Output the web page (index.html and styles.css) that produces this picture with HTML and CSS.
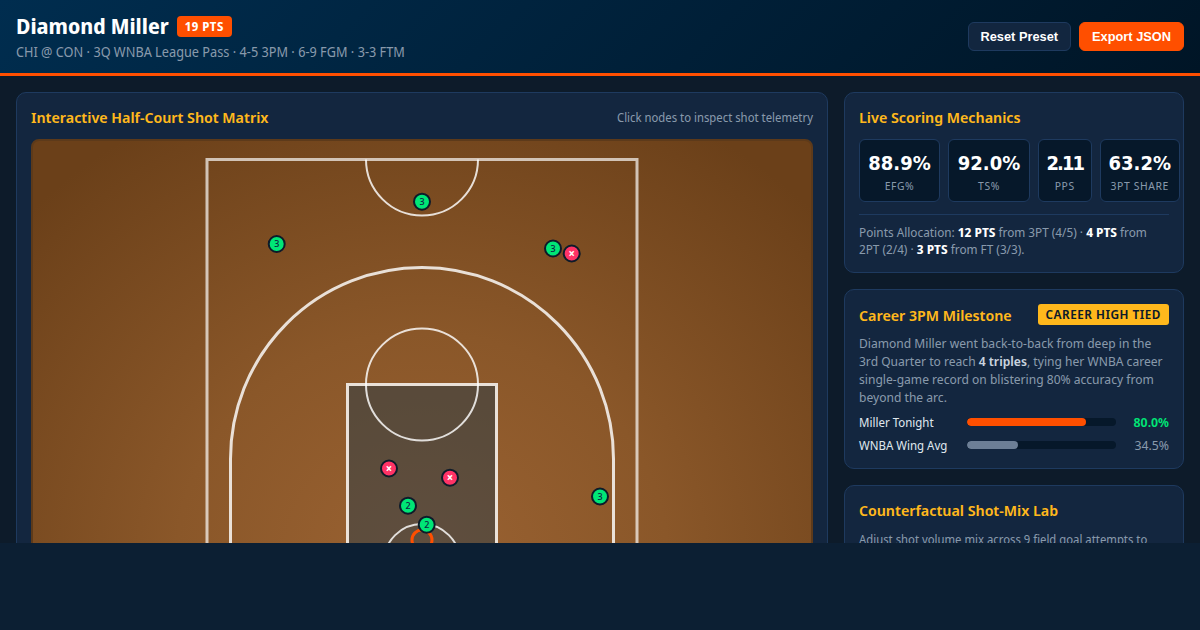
FILE: index.html
```html
<!DOCTYPE html>
<html lang="en">
<head>
<meta charset="utf-8">
<title>Diamond Miller Shot Matrix</title>
<link rel="stylesheet" href="styles.css">
</head>
<body>
<div class="app">
  <header class="topbar">
    <div class="identity">
      <div class="title-row"><h1>Diamond Miller</h1><span class="pts">19 PTS</span></div>
      <p class="sub">CHI @ CON · 3Q WNBA League Pass · 4-5 3PM · 6-9 FGM · 3-3 FTM</p>
    </div>
    <div class="actions">
      <button class="btn">Reset Preset</button>
      <button class="btn primary">Export JSON</button>
    </div>
  </header>
  <main class="layout">
    <section class="card court-card">
      <div class="card-head">
        <h2>Interactive Half-Court Shot Matrix</h2>
        <span class="hint">Click nodes to inspect shot telemetry</span>
      </div>
      <div class="court">
        <svg class="court-svg" viewBox="33 141 778 500" width="778" height="500">
          <rect class="line key" x="347.500" y="384.500" width="149" height="300"/>
          <rect class="line outer" x="207" y="159.500" width="430" height="600"/>
          <path class="line thin" d="M366 159.500A56 56 0 0 0 478 159.500"/>
          <path class="line" d="M230.500 760V459A191.500 191.500 0 0 1 613.500 459V760"/>
          <circle class="line thin" cx="422" cy="384.500" r="56"/>
          <circle class="line thin" cx="422" cy="562" r="38"/>
          <circle class="hoop" cx="422" cy="540" r="10"/>
          <g class="mark make"><circle cx="422" cy="201.700" r="8"/><text x="422" y="205">3</text></g>
          <g class="mark make"><circle cx="276.700" cy="244" r="8"/><text x="276.700" y="247.300">3</text></g>
          <g class="mark make"><circle cx="553" cy="248.500" r="8"/><text x="553" y="251.800">3</text></g>
          <g class="mark miss"><circle cx="571.700" cy="253.500" r="8"/><text x="571.700" y="257.500">×</text></g>
          <g class="mark miss"><circle cx="389" cy="468.500" r="8"/><text x="389" y="472.500">×</text></g>
          <g class="mark miss"><circle cx="450" cy="477.700" r="8"/><text x="450" y="481.700">×</text></g>
          <g class="mark make"><circle cx="408" cy="505.700" r="8"/><text x="408" y="509">2</text></g>
          <g class="mark make"><circle cx="426.700" cy="524.700" r="8"/><text x="426.700" y="528">2</text></g>
          <g class="mark make"><circle cx="600" cy="496.500" r="8"/><text x="600" y="499.800">3</text></g>
        </svg>
      </div>
    </section>
    <aside class="side">
      <section class="card">
        <h2>Live Scoring Mechanics</h2>
        <div class="stats">
          <div class="stat"><b>88.9%</b><span>EFG%</span></div>
          <div class="stat"><b>92.0%</b><span>TS%</span></div>
          <div class="stat"><b class="tight">2.11</b><span>PPS</span></div>
          <div class="stat"><b>63.2%</b><span>3PT SHARE</span></div>
        </div>
        <p class="alloc">Points Allocation: <strong>12 PTS</strong> from 3PT (4/5) · <strong>4 PTS</strong> from 2PT (2/4) · <strong>3 PTS</strong> from FT (3/3).</p>
      </section>
      <section class="card milestone-card">
        <div class="card-head">
          <h2>Career 3PM Milestone</h2>
          <span class="tag">CAREER HIGH TIED</span>
        </div>
        <p class="body-text">Diamond Miller went back-to-back from deep in the 3rd Quarter to reach <strong>4 triples</strong>, tying her WNBA career single-game record on blistering 80% accuracy from beyond the arc.</p>
        <div class="bar-row"><span class="bar-label">Miller Tonight</span><div class="track"><div class="fill hot" style="width:80%"></div></div><span class="bar-val good">80.0%</span></div>
        <div class="bar-row"><span class="bar-label">WNBA Wing Avg</span><div class="track"><div class="fill muted" style="width:34.5%"></div></div><span class="bar-val">34.5%</span></div>
      </section>
      <section class="card">
        <h2>Counterfactual Shot-Mix Lab</h2>
        <p class="lab">Adjust shot volume mix across 9 field goal attempts to</p>
      </section>
    </aside>
  </main>
</div>
</body>
</html>
```
FILE: styles.css
```css
* { box-sizing: border-box; }
html, body { margin: 0; height: 100%; }
body {
  background: #0c1f33;
  color: #fff;
  font-family: "Noto Sans Display", "Noto Sans", sans-serif;
}
.app { height: 543px; overflow: hidden; background: #0d1b2a; }
.topbar {
  height: 76px;
  padding: 0 16px;
  display: flex;
  align-items: center;
  justify-content: space-between;
  background: linear-gradient(135deg, #002d4f 0%, #001526 100%);
  border-bottom: 3px solid #ff4f00;
}
.title-row { display: flex; align-items: center; gap: 8px; }
h1 { margin: 0; font-size: 20.800px; font-weight: 700; line-height: 28px; }
.pts {
  background: #ff4f00;
  border-radius: 4px;
  padding: 2px 8px;
  font-size: 12px;
  font-weight: 700;
  line-height: 17px;
  letter-spacing: .5px;
}
.sub { margin: 3px 0 0; font-size: 13.500px; line-height: 18px; color: #8899ab; }
.actions { display: flex; gap: 8px; }
.btn {
  height: 29px;
  padding: 0 12px;
  border: 1px solid #1e3a5f;
  border-radius: 6px;
  background: #12263f;
  color: #fff;
  font-family: "Liberation Sans", sans-serif;
  font-size: 12.800px;
  font-weight: 700;
}
.btn.primary { background: #ff4f00; border-color: #ff4f00; }
.layout {
  display: grid;
  grid-template-columns: 812px 340px;
  gap: 16px;
  padding: 16px;
  align-items: start;
}
.card {
  background: #13263f;
  border: 1px solid #1e3a5f;
  border-radius: 10px;
  padding: 14px;
}
.side { display: flex; flex-direction: column; gap: 16px; }
h2 { margin: 0; font-size: 15px; line-height: 20px; font-weight: 600; color: #ffb81c; }
.card-head { display: flex; align-items: center; justify-content: space-between; gap: 8px; }
.hint { font-size: 12px; color: #8899ab; }
.court {
  margin-top: 12px;
  height: 560px;
  border: 2px solid #5d3a1a;
  border-radius: 8px;
  overflow: hidden;
  background: radial-gradient(ellipse 70% 90% at 50% 75%, #9a6232 0%, #8a5729 45%, #6b4019 100%);
}
.court-svg { display: block; }
.line { fill: none; stroke: #fff; stroke-width: 3; opacity: .82; }
.line.thin { stroke-width: 2; }
.line.outer { stroke-width: 3; opacity: .68; }
.line.key { fill: rgba(26, 56, 78, .55); }
.hoop { fill: none; stroke: #ff4f00; stroke-width: 3; }
.mark circle { stroke: #0d1b2a; stroke-width: 2; }
.make circle { fill: #00e676; }
.miss circle { fill: #ff3366; }
.mark text { font-size: 9.500px; text-anchor: middle; }
.make text { fill: #0d2a45; font-weight: 500; }
.miss text { fill: #fff; font-weight: 700; font-size: 12px; }
.stats { display: grid; grid-template-columns: 81px 82px 53.500px 80.500px; gap: 8px; margin-top: 12px; width: 321px; }
.stat {
  background: #06182a;
  border: 1px solid #1e3a5f;
  border-radius: 6px;
  padding: 9px 0 8px;
  text-align: center;
}
.stat b {
  display: block;
  font-family: "DejaVu Sans Condensed", "DejaVu Sans", sans-serif;
  font-size: 20px;
  line-height: 28px;
  font-weight: 700;
}
.stat b.tight { letter-spacing: -2px; }
.stat span { display: block; margin-top: 1px; font-size: 11px; line-height: 15px; color: #8899ab; letter-spacing: .6px; white-space: nowrap; }
.alloc {
  margin: 12px 0 0;
  padding-top: 9px;
  border-top: 1px solid #1e3a5f;
  font-size: 12.500px;
  line-height: 17px;
  color: #8899ab;
}
.alloc strong { color: #fff; font-weight: 700; }
.tag {
  background: #ffb81c;
  color: #0d1b2a;
  border-radius: 3px;
  padding: 2px 8px;
  font-size: 12.500px;
  line-height: 17px;
  font-weight: 600;
  letter-spacing: .5px;
}
.body-text { margin: 9px 0 0; font-size: 12.800px; line-height: 18px; color: #8899ab; }
.body-text strong { color: #c9d3de; font-weight: 600; }
.lab { margin: 11px 0 0; font-size: 12px; line-height: 18px; color: #8899ab; }
.bar-row { display: flex; align-items: center; gap: 8px; margin-top: 5px; height: 18px; }
.body-text + .bar-row { margin-top: 7px; }
.bar-label { width: 100px; font-size: 12.200px; color: #dfe5ec; white-space: nowrap; }
.track { flex: 1; height: 8px; border-radius: 4px; background: #06182a; overflow: hidden; }
.fill { height: 100%; border-radius: 4px; }
.fill.hot { background: #ff4f00; }
.fill.muted { background: #6d7f96; }
.bar-val { width: 45px; text-align: right; font-size: 13px; color: #8899ab; }
.bar-val.good { color: #00e676; font-weight: 600; }
```
